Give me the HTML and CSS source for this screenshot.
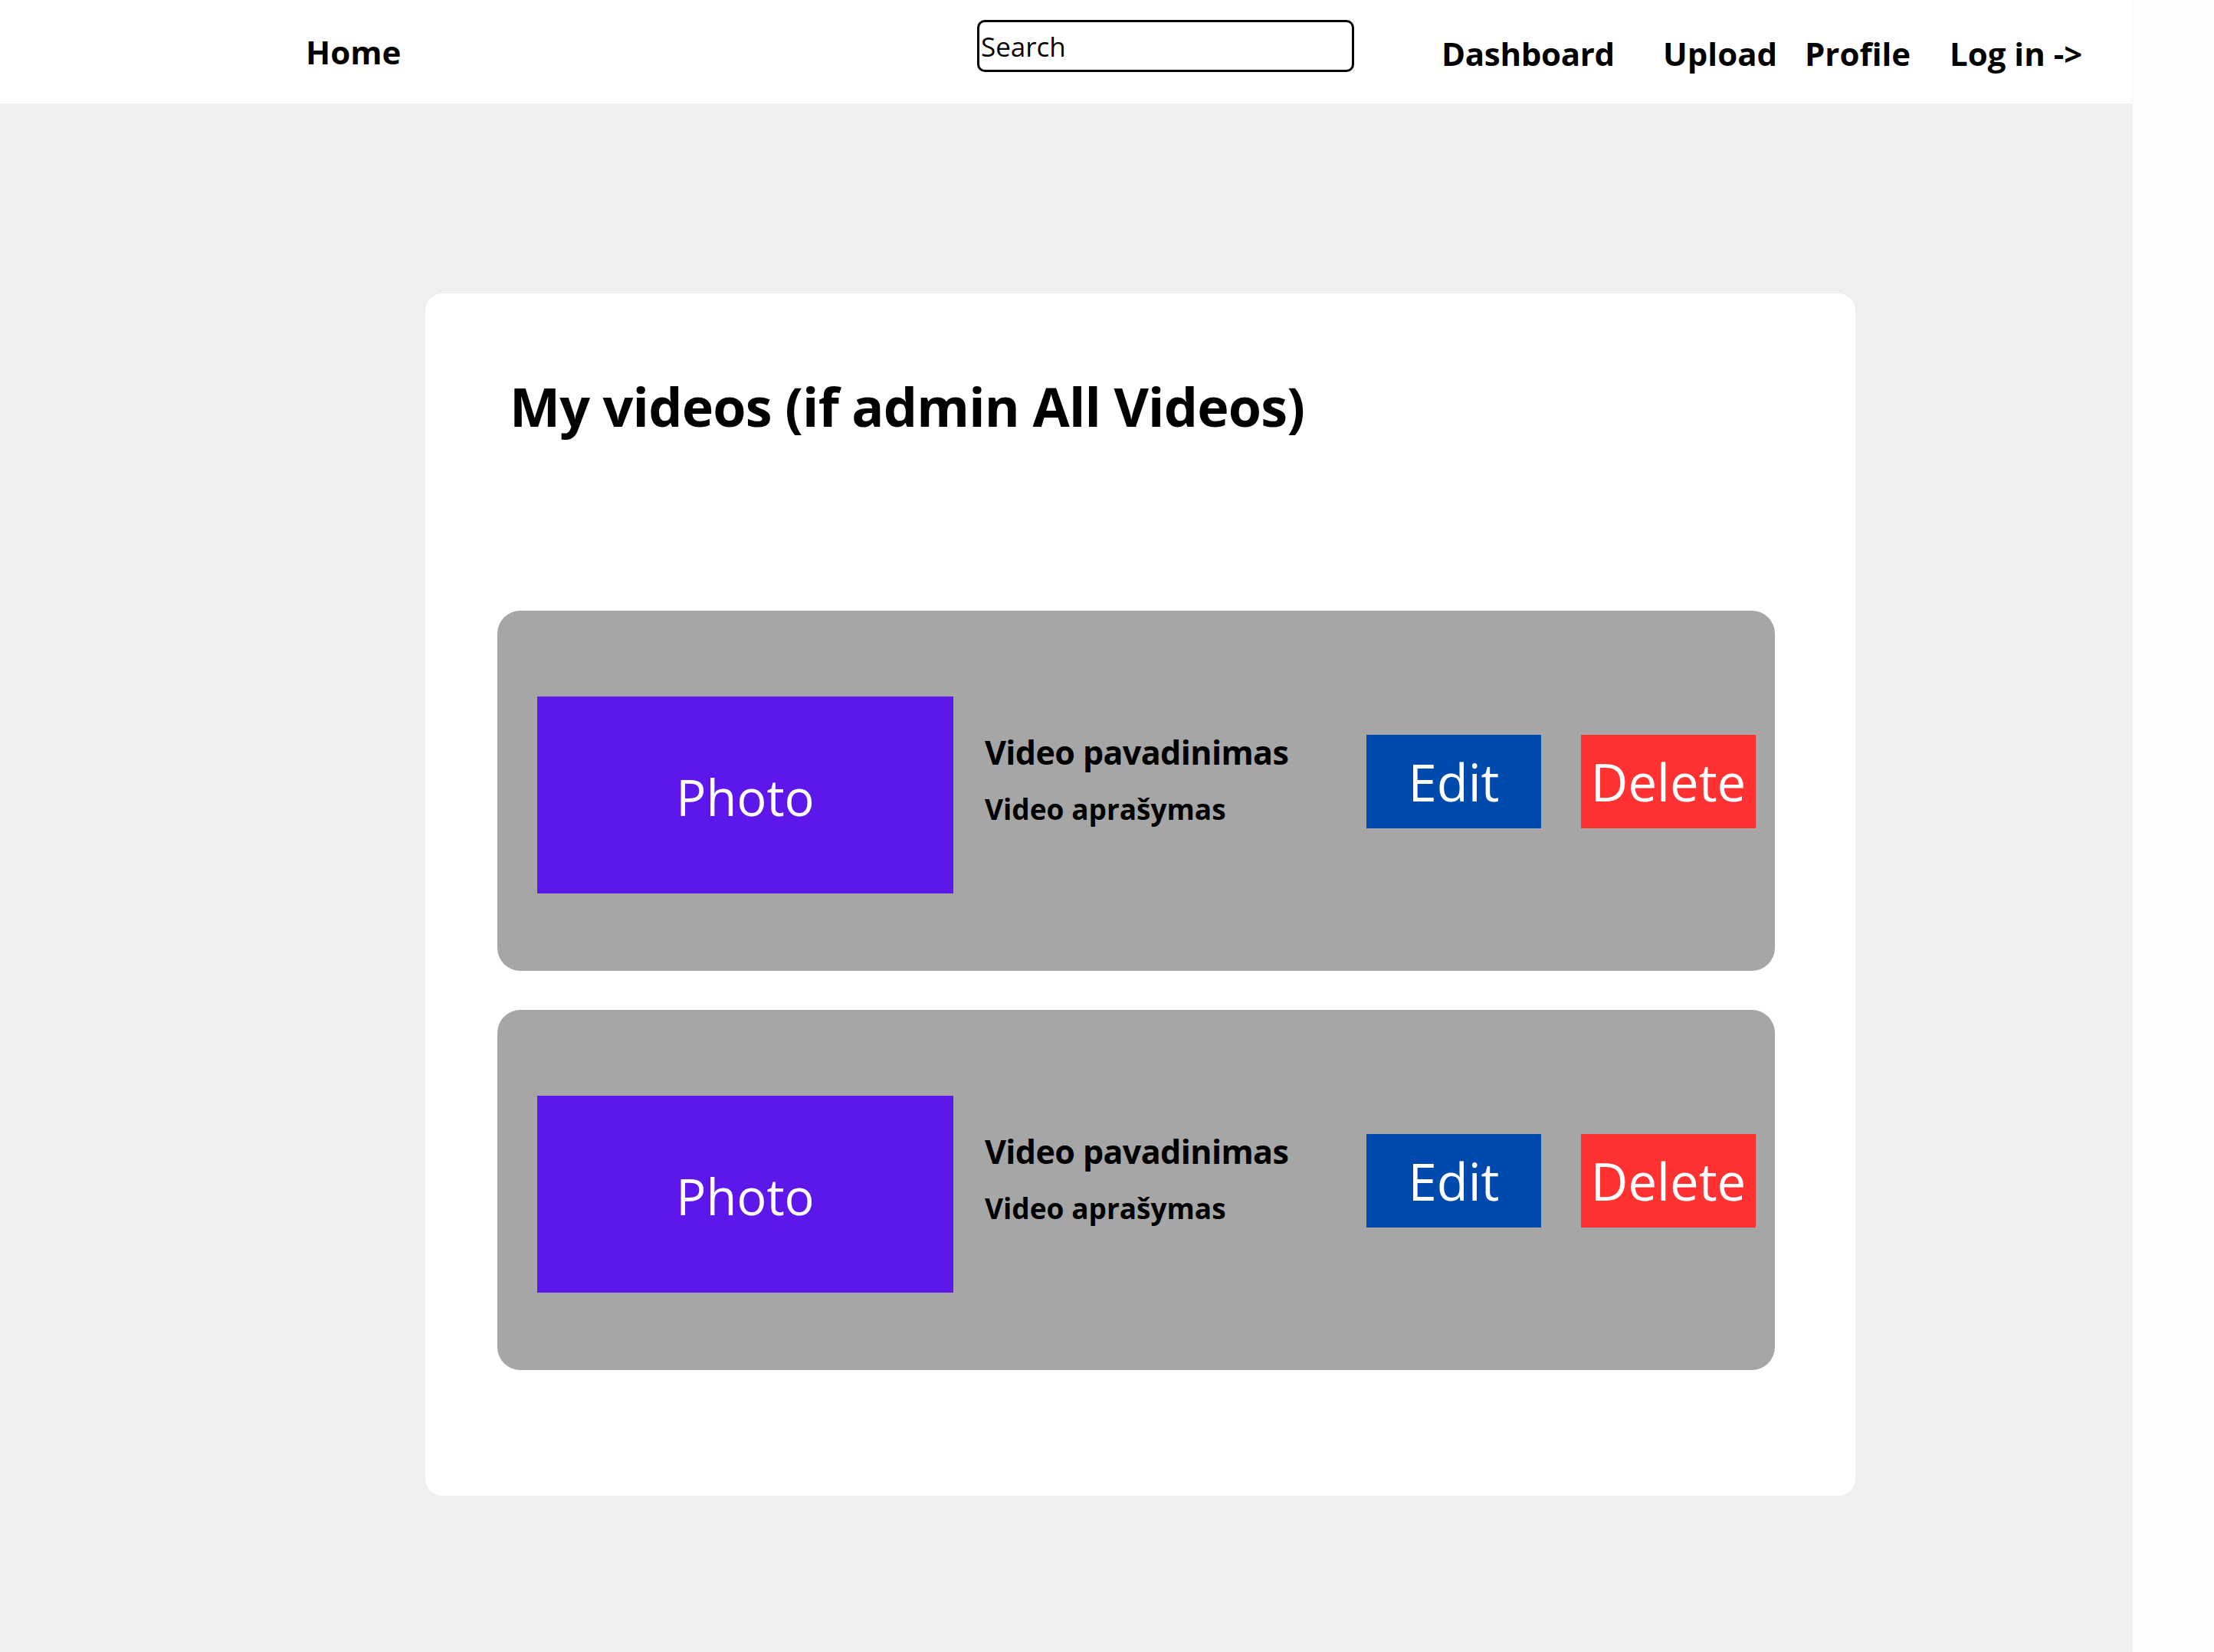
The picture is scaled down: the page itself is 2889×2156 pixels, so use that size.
FILE: index.html
```html
<!DOCTYPE html>
<html lang="lt">
<head>
<meta charset="utf-8">
<title>My videos</title>
<link rel="stylesheet" href="styles.css">
</head>
<body>
<div class="page">
  <header class="topbar">
    <a class="home-link" href="#">Home</a>
    <input class="search" type="text" value="Search" aria-label="Search">
    <nav class="nav">
      <a class="nav-link nav-dashboard" href="#">Dashboard</a>
      <a class="nav-link nav-upload" href="#">Upload</a>
      <a class="nav-link nav-profile" href="#">Profile</a>
      <a class="nav-link nav-login" href="#">Log in -&gt;</a>
    </nav>
  </header>
  <main class="main">
    <section class="card">
      <h1 class="title">My videos (if admin All Videos)</h1>
      <div class="video-row">
        <div class="photo">Photo</div>
        <div class="info">
          <div class="video-name">Video pavadinimas</div>
          <div class="video-desc">Video aprašymas</div>
        </div>
        <div class="actions">
          <button class="btn btn-edit">Edit</button>
          <button class="btn btn-delete">Delete</button>
        </div>
      </div>
      <div class="video-row">
        <div class="photo">Photo</div>
        <div class="info">
          <div class="video-name">Video pavadinimas</div>
          <div class="video-desc">Video aprašymas</div>
        </div>
        <div class="actions">
          <button class="btn btn-edit">Edit</button>
          <button class="btn btn-delete">Delete</button>
        </div>
      </div>
    </section>
  </main>
</div>
</body>
</html>
```

FILE: styles.css
```css
* { box-sizing: border-box; }

html, body {
  margin: 0;
  padding: 0;
  background: #fdfdfd;
  font-family: "Open Sans", "Noto Sans", "Liberation Sans", sans-serif;
  color: #000;
}

.page {
  width: 2783px;
  min-height: 2156px;
  background: #efefef;
  border-right: 1px solid #f4f4f4;
}

.topbar {
  height: 135px;
  background: #ffffff;
  display: flex;
  align-items: center;
  padding-left: 399px;
}

.home-link {
  width: 876px;
  font-size: 42px;
  font-weight: 700;
  line-height: 1;
  color: #000;
  text-decoration: none;
}

.search {
  width: 492px;
  height: 68px;
  margin-bottom: 15px;
  border: 3px solid #000;
  border-radius: 10px;
  padding: 0 0 0 2px;
  font-family: "Open Sans", "Noto Sans", sans-serif;
  font-size: 35px;
  color: #000;
  background: #fff;
  outline: none;
}

.nav {
  display: flex;
  align-items: center;
  margin-left: 114px;
  margin-top: 4px;
}

.nav-link {
  font-size: 42px;
  font-weight: 700;
  line-height: 1;
  color: #000;
  text-decoration: none;
  white-space: nowrap;
}

.nav-dashboard { width: 289px; letter-spacing: -0.3px; }
.nav-upload { width: 185px; }
.nav-profile { width: 189px; }

.main {
  padding: 248px 0 204px 555px;
}

.card {
  width: 1866px;
  height: 1569px;
  background: #ffffff;
  border-radius: 22px;
  padding: 112px 105px 0 94px;
}

.title {
  margin: 0 0 232px 16px;
  font-size: 70px;
  font-weight: 700;
  line-height: 70px;
  letter-spacing: -0.8px;
  white-space: nowrap;
}

.video-row {
  height: 470px;
  background: #a6a6a6;
  border-radius: 30px;
  display: flex;
  align-items: flex-start;
  padding: 112px 0 0 52px;
  margin-bottom: 51px;
}

.photo {
  width: 543px;
  height: 257px;
  background: #5e17eb;
  color: #fff;
  font-size: 65px;
  display: flex;
  align-items: center;
  justify-content: center;
  padding-top: 4px;
}

.info {
  width: 498px;
  margin-left: 41px;
  margin-top: 51px;
  font-weight: 700;
}

.video-name {
  font-size: 43px;
  line-height: 43px;
  letter-spacing: -0.6px;
}

.video-desc {
  margin-top: 34px;
  font-size: 37px;
  line-height: 37px;
}

.actions {
  display: flex;
  gap: 52px;
  margin-top: 50px;
}

.btn {
  width: 228px;
  height: 122px;
  border: none;
  border-radius: 0;
  padding: 0;
  color: #fff;
  font-family: "Open Sans", "Noto Sans", sans-serif;
  font-size: 67px;
  line-height: 1;
}

.btn-edit { background: #004aad; }
.btn-delete { background: #ff3131; }
```
